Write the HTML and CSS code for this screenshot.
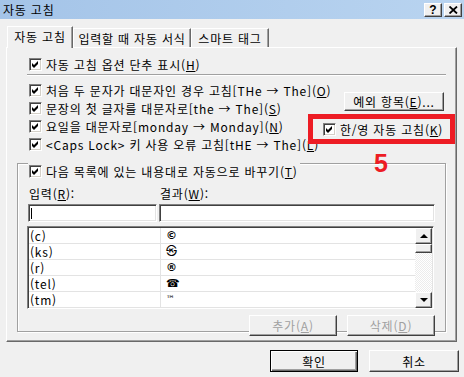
FILE: index.html
```html
<!DOCTYPE html>
<html lang="ko">
<head>
    <meta charset="UTF-8">
    <title>자동 고침</title>
    <link rel="stylesheet" href="styles.css">
</head>
<body>
    <div class="titlebar">
        <span class="title">자동 고침</span>
        <div class="caption-buttons">
            <span class="cap-btn help">?</span>
            <span class="cap-btn close">
                <svg width="9" height="8" viewBox="0 0 9 8"><path d="M0.5 0.5 L8 7.5 M8 0.5 L0.5 7.5" stroke="#000" stroke-width="1.8"/></svg>
            </span>
        </div>
    </div>

    <div class="main">
        <div class="tabs">
            <div class="tab active">자동 고침</div>
            <div class="tab tab-format">입력할 때 자동 서식</div>
            <div class="tab tab-smart">스마트 태그</div>
        </div>

        <div class="panel">
            <label class="row first-row">
                <span class="cb checked"></span>
                <span>자동 고침 옵션 단추 표시(<u>H</u>)</span>
            </label>
            <div class="separator"></div>

            <div class="options">
                <div class="option-list">
                    <label class="row"><span class="cb checked"></span><span>처음 두 문자가 대문자인 경우 고침[THe → The](<u>O</u>)</span></label>
                    <label class="row"><span class="cb checked"></span><span>문장의 첫 글자를 대문자로[the → The](<u>S</u>)</span></label>
                    <label class="row"><span class="cb checked"></span><span>요일을 대문자로[monday → Monday](<u>N</u>)</span></label>
                    <label class="row"><span class="cb checked"></span><span>&lt;Caps Lock&gt; 키 사용 오류 고침[tHE → The](<u>L</u>)</span></label>
                </div>
                <div class="option-side">
                    <button class="btn btn-except">예외 항목(<u>E</u>)...</button>
                    <div class="highlight">
                        <label class="row"><span class="cb checked"></span><span>한/영 자동 고침(<u>K</u>)</span></label>
                        <span class="mark">5</span>
                    </div>
                </div>
            </div>

            <div class="group">
                <label class="row group-title"><span class="cb checked"></span><span>다음 목록에 있는 내용대로 자동으로 바꾸기(<u>T</u>)</span></label>

                <div class="fields">
                    <span class="field-label">입력(<u>R</u>):</span>
                    <span class="field-label">결과(<u>W</u>):</span>
                    <div class="input"><span class="caret"></span></div>
                    <div class="input"></div>
                </div>

                <div class="list">
                    <div class="list-rows">
                        <div class="list-row"><span class="col-in">(c)</span><span class="col-out">©</span></div>
                        <div class="list-row"><span class="col-in">(ks)</span><span class="col-out">㉿</span></div>
                        <div class="list-row"><span class="col-in">(r)</span><span class="col-out">®</span></div>
                        <div class="list-row"><span class="col-in">(tel)</span><span class="col-out">☎</span></div>
                        <div class="list-row"><span class="col-in">(tm)</span><span class="col-out tm">™</span></div>
                    </div>
                    <div class="scrollbar">
                        <div class="sb-btn"><span class="arrow-up"></span></div>
                        <div class="sb-thumb"></div>
                        <div class="sb-track"></div>
                        <div class="sb-btn"><span class="arrow-down"></span></div>
                    </div>
                </div>

                <div class="group-buttons">
                    <button class="btn disabled">추가(<u>A</u>)</button>
                    <button class="btn disabled">삭제(<u>D</u>)</button>
                </div>
            </div>
        </div>

        <div class="dialog-buttons">
            <button class="btn default">확인</button>
            <button class="btn btn-cancel">취소</button>
        </div>
    </div>
</body>
</html>
```

FILE: styles.css
```css
* {
    margin: 0;
    padding: 0;
    box-sizing: border-box;
}

body {
    width: 464px;
    height: 377px;
    overflow: hidden;
    background: #f0f0f0;
    font-family: "Noto Sans CJK KR", "Noto Sans", sans-serif;
    font-size: 12px;
    letter-spacing: 0.8px;
    color: #000;
}

u {
    text-decoration: underline;
    text-underline-offset: 1px;
}

/* title bar */
.titlebar {
    height: 19px;
    display: flex;
    align-items: center;
    justify-content: space-between;
    padding: 0 2px 0 3px;
    background: linear-gradient(to right, #a4c4e8, #b9d4f0);
}

.title {
    font-size: 12px;
    line-height: 19px;
}

.caption-buttons {
    display: flex;
    gap: 2px;
}

.cap-btn {
    width: 18px;
    height: 14px;
    display: flex;
    align-items: center;
    justify-content: center;
    background: #f0f0f0;
    border: 1px solid;
    border-color: #fff #404040 #404040 #fff;
    box-shadow: inset -1px -1px 0 #a0a0a0;
}

.cap-btn.help {
    font-family: "Liberation Sans", sans-serif;
    font-weight: 700;
    font-size: 12px;
    line-height: 12px;
    letter-spacing: 0;
}

/* tabs + panel */
.main {
    padding: 7px 5px 0 6px;
}

.tabs {
    display: flex;
    align-items: flex-end;
    height: 21px;
    margin-left: 1px;
}

.tab {
    height: 19px;
    display: flex;
    align-items: center;
    justify-content: center;
    border: 1px solid;
    border-bottom: none;
    border-color: #fff #696969 #fff #fff;
    box-shadow: inset -1px 0 0 #a0a0a0;
    background: #f0f0f0;
}

.tab.active {
    height: 22px;
    width: 66px;
    margin-bottom: -1px;
    padding-bottom: 3px;
    position: relative;
    z-index: 1;
}

.tab-format {
    width: 118px;
}

.tab-smart {
    width: 78px;
}

.panel {
    width: 451px;
    height: 295px;
    border: 1px solid;
    border-color: #fff #696969 #696969 #fff;
    box-shadow: inset -1px -1px 0 #a0a0a0;
    padding-top: 7px;
}

.row {
    display: flex;
    align-items: center;
    height: 18px;
    gap: 4px;
    white-space: nowrap;
}

.first-row {
    padding-left: 22px;
}

.cb {
    width: 13px;
    height: 13px;
    flex: none;
    background: #fff;
    border: 1px solid;
    border-color: #808080 #fff #fff #808080;
    box-shadow: inset 1px 1px 0 #404040, inset -1px -1px 0 #d4d0c8;
}

.cb.checked {
    background: #fff url("data:image/svg+xml,%3Csvg xmlns='http://www.w3.org/2000/svg' width='11' height='11'%3E%3Cpath d='M2 4 L4 6 L8 2 L8 5 L4 9 L2 7 Z' fill='%23000'/%3E%3C/svg%3E") no-repeat 0 0;
}

.separator {
    margin: 1px 0 0 20px;
    width: 419px;
    height: 2px;
    border-top: 1px solid #a0a0a0;
    border-bottom: 1px solid #fff;
}

.options {
    display: flex;
    margin-top: 5px;
}

.option-list {
    flex: none;
    width: 301px;
    padding-left: 22px;
}

.option-side {
    flex: none;
    width: 147px;
    display: flex;
    flex-direction: column;
}

.btn {
    font-family: inherit;
    font-size: 12px;
    letter-spacing: 0.8px;
    color: #000;
    background: #f0f0f0;
    border: 1px solid;
    border-color: #fff #404040 #404040 #fff;
    box-shadow: inset -1px -1px 0 #a0a0a0;
    display: flex;
    align-items: center;
    justify-content: center;
}

.btn-except {
    width: 100px;
    height: 19px;
    margin: 11px 0 0 36px;
}

.highlight {
    position: relative;
    margin-top: 3px;
    height: 30px;
    border: 5px solid #ed1c24;
    padding-left: 10px;
    display: flex;
    align-items: center;
}

.mark {
    position: absolute;
    left: 61px;
    top: 33px;
    font-family: "Liberation Sans", sans-serif;
    font-weight: 700;
    font-size: 25px;
    line-height: 22px;
    letter-spacing: 0;
    color: #ed1c24;
    z-index: 2;
}

/* group box */
.group {
    margin: 10px 0 0 10px;
    width: 429px;
    height: 169px;
    border: 1px solid #a0a0a0;
    box-shadow: inset 1px 1px 0 #fff, 1px 1px 0 #fff;
}

.group-title {
    display: inline-flex;
    margin: -10px 0 0 10px;
    padding: 0 2px 0 1px;
    background: #f0f0f0;
    position: relative;
}

.fields {
    display: grid;
    grid-template-columns: 129px 276px;
    column-gap: 2px;
    margin: 6px 0 0 10px;
}

.field-label {
    height: 16px;
    line-height: 14px;
    padding-left: 1px;
}

.input {
    height: 18px;
    margin-top: 1px;
    background: #fff;
    border: 1px solid;
    border-color: #808080 #fff #fff #808080;
    box-shadow: inset 1px 1px 0 #404040, inset -1px -1px 0 #e3e3e3;
    padding: 3px 0 0 2px;
}

.caret {
    display: block;
    width: 1px;
    height: 11px;
    background: #000;
}

.list {
    display: flex;
    margin: 4px 0 0 9px;
    width: 407px;
    height: 83px;
    overflow: hidden;
    background: #fff;
    border: 1px solid;
    border-color: #808080 #fff #fff #808080;
    box-shadow: inset 1px 1px 0 #404040, inset -1px -1px 0 #e3e3e3;
    padding: 1px 1px 0 1px;
}

.list-rows {
    flex: 1;
}

.list-row {
    display: flex;
    height: 16px;
    border-bottom: 1px solid #e3e3e3;
    line-height: 15px;
}

.col-in {
    width: 132px;
    padding-left: 1px;
    border-right: 1px solid #e3e3e3;
}

.col-out {
    padding-left: 5px;
    font-family: "DejaVu Sans", "Noto Sans CJK KR", sans-serif;
    font-size: 11px;
    font-weight: 700;
    letter-spacing: 0;
}

.col-out.tm {
    font-size: 9px;
    font-weight: 400;
}

.scrollbar {
    width: 17px;
    display: flex;
    flex-direction: column;
}

.sb-btn,
.sb-thumb {
    background: #f0f0f0;
    border: 1px solid;
    border-color: #fff #404040 #404040 #fff;
    box-shadow: inset -1px -1px 0 #a0a0a0;
}

.sb-btn {
    height: 16px;
    display: flex;
    align-items: center;
    justify-content: center;
}

.sb-thumb {
    height: 9px;
}

.sb-track {
    flex: 1;
    background: repeating-conic-gradient(#fff 0 25%, #ececec 0 50%) 0 0 / 2px 2px;
}

.arrow-up,
.arrow-down {
    width: 0;
    height: 0;
    border-left: 4px solid transparent;
    border-right: 4px solid transparent;
}

.arrow-up {
    border-bottom: 4px solid #000;
}

.arrow-down {
    border-top: 4px solid #000;
}

.group-buttons {
    display: flex;
    justify-content: flex-end;
    gap: 10px;
    margin: 6px 0 0 0;
    width: 417px;
}

.group-buttons .btn {
    width: 88px;
    height: 21px;
}

.btn.disabled {
    color: #a0a0a0;
}

/* dialog buttons */
.dialog-buttons {
    display: flex;
    justify-content: flex-end;
    gap: 11px;
    margin-top: 8px;
}

.dialog-buttons .btn {
    height: 22px;
}

.btn.default {
    width: 88px;
    border: 1px solid #000;
    box-shadow: inset 1px 1px 0 #fff, inset -1px -1px 0 #696969, inset -2px -2px 0 #a0a0a0;
}

.btn-cancel {
    width: 90px;
}
```
